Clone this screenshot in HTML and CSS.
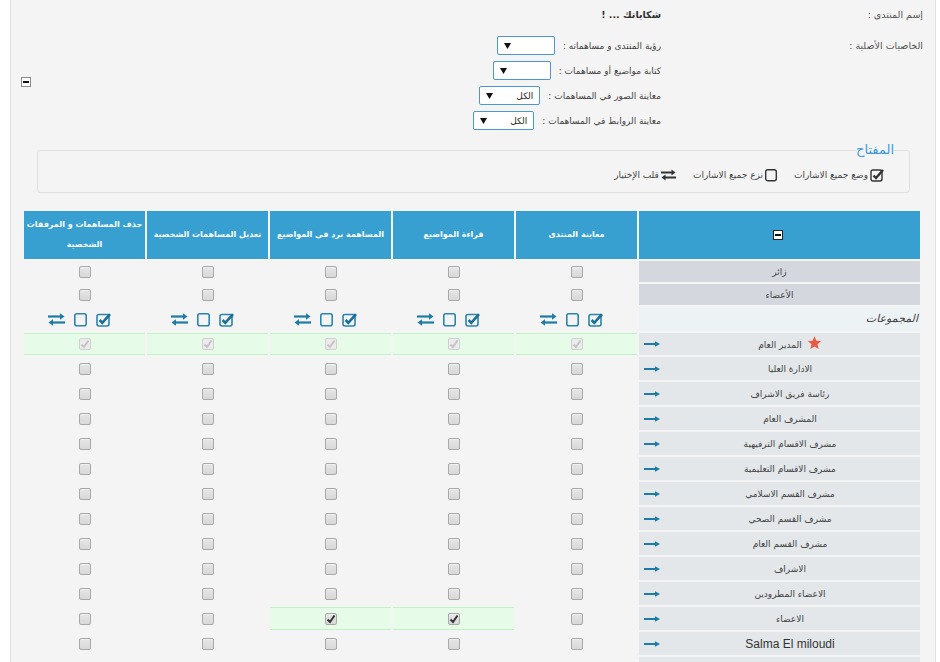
FILE: index.html
```html
<!DOCTYPE html>
<html lang="ar">
<head>
<meta charset="utf-8">
<title>الصلاحيات</title>
<link rel="stylesheet" href="styles.css">
</head>
<body>
<div class="page" dir="rtl">
  <div class="info">
    <div class="info-row row1">
      <div class="info-label">إسم المنتدى :</div>
      <div class="info-value strong">شكاياتك ... !</div>
      <div></div>
    </div>
    <div class="info-row row2">
      <div class="info-label lab2">الخاصيات الأصلية :</div>
      <div class="info-value">
        <div class="opt"><span>رؤية المنتدى و مساهماته :</span><span class="sel"><span></span><svg class="dd" width="7" height="6" viewBox="0 0 7 6"><path d="M0 0H7L3.5 6Z"/></svg></span></div>
        <div class="opt"><span>كتابة مواضيع أو مساهمات :</span><span class="sel"><span></span><svg class="dd" width="7" height="6" viewBox="0 0 7 6"><path d="M0 0H7L3.5 6Z"/></svg></span></div>
        <div class="opt"><span>معاينة الصور في المساهمات :</span><span class="sel wide"><span>الكل</span><svg class="dd" width="7" height="6" viewBox="0 0 7 6"><path d="M0 0H7L3.5 6Z"/></svg></span></div>
        <div class="opt"><span>معاينة الروابط في المساهمات :</span><span class="sel wide"><span>الكل</span><svg class="dd" width="7" height="6" viewBox="0 0 7 6"><path d="M0 0H7L3.5 6Z"/></svg></span></div>
      </div>
      <div class="toggle-cell"><span class="toggle"></span></div>
    </div>
  </div>

  <fieldset class="key">
    <legend>المفتاح</legend>
    <div class="key-items">
      <span class="ki"><svg width="15" height="14" viewBox="0 0 15 14"><rect x="1" y="2" width="11" height="11" rx="2" fill="none" stroke="#333" stroke-width="1.4"/><path d="M3.5 7.5L6 10L13 2" fill="none" stroke="#333" stroke-width="2.4"/></svg>وضع جميع الاشارات</span>
      <span class="ki"><svg width="12" height="14" viewBox="0 0 12 14"><rect x="0.7" y="1.7" width="10.6" height="11" rx="2" fill="none" stroke="#333" stroke-width="1.4"/></svg>نزع جميع الاشارات</span>
      <span class="ki"><svg width="15" height="12" viewBox="0 0 15 12"><path d="M0 3.5H11" stroke="#333" stroke-width="2"/><path d="M10.5 0.5L14.5 3.5L10.5 6.5Z" fill="#333"/><path d="M4 8.5H15" stroke="#333" stroke-width="2"/><path d="M4.5 5.5L0.5 8.5L4.5 11.5Z" fill="#333"/></svg>قلب الإختيار</span>
    </div>
  </fieldset>

  <table class="perm">
    <colgroup><col class="c-name"><col class="c"><col class="c"><col class="c"><col class="c"><col class="c"></colgroup>
    <thead>
      <tr>
        <th><span class="toggle hdr"></span></th>
        <th>معاينة المنتدى</th>
        <th>قراءة المواضيع</th>
        <th>المساهمة برد في المواضيع</th>
        <th>تعديل المساهمات الشخصية</th>
        <th>حذف المساهمات و المرفقات<br>الشخصية</th>
      </tr>
    </thead>
    <tbody>
      <tr class="r-sm"><td class="name base">زائر</td><td><span class="cb"></span></td><td><span class="cb"></span></td><td><span class="cb"></span></td><td><span class="cb"></span></td><td><span class="cb"></span></td></tr>
      <tr class="r-sm"><td class="name base">الأعضاء</td><td><span class="cb"></span></td><td><span class="cb"></span></td><td><span class="cb"></span></td><td><span class="cb"></span></td><td><span class="cb"></span></td></tr>
      <tr class="r-grp">
        <td class="name grp-title">المجموعات</td>
        <td><span class="tools"><svg width="16" height="15" viewBox="0 0 16 15"><rect x="1" y="2.5" width="12" height="11.5" rx="2" fill="none" stroke="#2a84ad" stroke-width="1.6"/><path d="M3.6 8L6.3 10.8L14 2.2" fill="none" stroke="#1b6f96" stroke-width="2.6"/></svg><svg width="13" height="15" viewBox="0 0 13 15"><rect x="0.8" y="1.8" width="11.4" height="12" rx="2" fill="none" stroke="#2a84ad" stroke-width="1.6"/></svg><svg width="17" height="13" viewBox="0 0 17 13"><path d="M0 3.5H12.5" stroke="#1d7ba5" stroke-width="2.2"/><path d="M12 0.3L16.5 3.5L12 6.7Z" fill="#1d7ba5"/><path d="M4.5 9.5H17" stroke="#1d7ba5" stroke-width="2.2"/><path d="M5 6.3L0.5 9.5L5 12.7Z" fill="#1d7ba5"/></svg></span></td>
        <td><span class="tools"><svg width="16" height="15" viewBox="0 0 16 15"><rect x="1" y="2.5" width="12" height="11.5" rx="2" fill="none" stroke="#2a84ad" stroke-width="1.6"/><path d="M3.6 8L6.3 10.8L14 2.2" fill="none" stroke="#1b6f96" stroke-width="2.6"/></svg><svg width="13" height="15" viewBox="0 0 13 15"><rect x="0.8" y="1.8" width="11.4" height="12" rx="2" fill="none" stroke="#2a84ad" stroke-width="1.6"/></svg><svg width="17" height="13" viewBox="0 0 17 13"><path d="M0 3.5H12.5" stroke="#1d7ba5" stroke-width="2.2"/><path d="M12 0.3L16.5 3.5L12 6.7Z" fill="#1d7ba5"/><path d="M4.5 9.5H17" stroke="#1d7ba5" stroke-width="2.2"/><path d="M5 6.3L0.5 9.5L5 12.7Z" fill="#1d7ba5"/></svg></span></td>
        <td><span class="tools"><svg width="16" height="15" viewBox="0 0 16 15"><rect x="1" y="2.5" width="12" height="11.5" rx="2" fill="none" stroke="#2a84ad" stroke-width="1.6"/><path d="M3.6 8L6.3 10.8L14 2.2" fill="none" stroke="#1b6f96" stroke-width="2.6"/></svg><svg width="13" height="15" viewBox="0 0 13 15"><rect x="0.8" y="1.8" width="11.4" height="12" rx="2" fill="none" stroke="#2a84ad" stroke-width="1.6"/></svg><svg width="17" height="13" viewBox="0 0 17 13"><path d="M0 3.5H12.5" stroke="#1d7ba5" stroke-width="2.2"/><path d="M12 0.3L16.5 3.5L12 6.7Z" fill="#1d7ba5"/><path d="M4.5 9.5H17" stroke="#1d7ba5" stroke-width="2.2"/><path d="M5 6.3L0.5 9.5L5 12.7Z" fill="#1d7ba5"/></svg></span></td>
        <td><span class="tools"><svg width="16" height="15" viewBox="0 0 16 15"><rect x="1" y="2.5" width="12" height="11.5" rx="2" fill="none" stroke="#2a84ad" stroke-width="1.6"/><path d="M3.6 8L6.3 10.8L14 2.2" fill="none" stroke="#1b6f96" stroke-width="2.6"/></svg><svg width="13" height="15" viewBox="0 0 13 15"><rect x="0.8" y="1.8" width="11.4" height="12" rx="2" fill="none" stroke="#2a84ad" stroke-width="1.6"/></svg><svg width="17" height="13" viewBox="0 0 17 13"><path d="M0 3.5H12.5" stroke="#1d7ba5" stroke-width="2.2"/><path d="M12 0.3L16.5 3.5L12 6.7Z" fill="#1d7ba5"/><path d="M4.5 9.5H17" stroke="#1d7ba5" stroke-width="2.2"/><path d="M5 6.3L0.5 9.5L5 12.7Z" fill="#1d7ba5"/></svg></span></td>
        <td><span class="tools"><svg width="16" height="15" viewBox="0 0 16 15"><rect x="1" y="2.5" width="12" height="11.5" rx="2" fill="none" stroke="#2a84ad" stroke-width="1.6"/><path d="M3.6 8L6.3 10.8L14 2.2" fill="none" stroke="#1b6f96" stroke-width="2.6"/></svg><svg width="13" height="15" viewBox="0 0 13 15"><rect x="0.8" y="1.8" width="11.4" height="12" rx="2" fill="none" stroke="#2a84ad" stroke-width="1.6"/></svg><svg width="17" height="13" viewBox="0 0 17 13"><path d="M0 3.5H12.5" stroke="#1d7ba5" stroke-width="2.2"/><path d="M12 0.3L16.5 3.5L12 6.7Z" fill="#1d7ba5"/><path d="M4.5 9.5H17" stroke="#1d7ba5" stroke-width="2.2"/><path d="M5 6.3L0.5 9.5L5 12.7Z" fill="#1d7ba5"/></svg></span></td>
      </tr>
      <tr class="r-admin">
        <td class="name grp"><span class="go"><svg width="16" height="6" viewBox="0 0 16 6"><path d="M0 3H12" stroke="#1d7ba5" stroke-width="2"/><path d="M11 0.2L16 3L11 5.8Z" fill="#1d7ba5"/></svg></span><svg class="star" width="15" height="14" viewBox="0 0 24 23"><path d="M12 0.5L15.1 7.8L23 8.4L17 13.6L18.8 21.4L12 17.3L5.2 21.4L7 13.6L1 8.4L8.9 7.8Z" fill="#ea5a42"/></svg>المدير العام</td>
        <td class="on"><span class="cb dis"><svg width="10" height="10" viewBox="0 0 10 10"><path d="M1.5 5.5L4 8L8.5 1.5" fill="none" stroke="#c4c4c4" stroke-width="2"/></svg></span></td>
        <td class="on"><span class="cb dis"><svg width="10" height="10" viewBox="0 0 10 10"><path d="M1.5 5.5L4 8L8.5 1.5" fill="none" stroke="#c4c4c4" stroke-width="2"/></svg></span></td>
        <td class="on"><span class="cb dis"><svg width="10" height="10" viewBox="0 0 10 10"><path d="M1.5 5.5L4 8L8.5 1.5" fill="none" stroke="#c4c4c4" stroke-width="2"/></svg></span></td>
        <td class="on"><span class="cb dis"><svg width="10" height="10" viewBox="0 0 10 10"><path d="M1.5 5.5L4 8L8.5 1.5" fill="none" stroke="#c4c4c4" stroke-width="2"/></svg></span></td>
        <td class="on"><span class="cb dis"><svg width="10" height="10" viewBox="0 0 10 10"><path d="M1.5 5.5L4 8L8.5 1.5" fill="none" stroke="#c4c4c4" stroke-width="2"/></svg></span></td>
      </tr>
      <tr><td class="name grp"><span class="go"><svg width="16" height="6" viewBox="0 0 16 6"><path d="M0 3H12" stroke="#1d7ba5" stroke-width="2"/><path d="M11 0.2L16 3L11 5.8Z" fill="#1d7ba5"/></svg></span>الادارة العليا</td><td><span class="cb"></span></td><td><span class="cb"></span></td><td><span class="cb"></span></td><td><span class="cb"></span></td><td><span class="cb"></span></td></tr>
      <tr><td class="name grp"><span class="go"><svg width="16" height="6" viewBox="0 0 16 6"><path d="M0 3H12" stroke="#1d7ba5" stroke-width="2"/><path d="M11 0.2L16 3L11 5.8Z" fill="#1d7ba5"/></svg></span>رئاسة فريق الاشراف</td><td><span class="cb"></span></td><td><span class="cb"></span></td><td><span class="cb"></span></td><td><span class="cb"></span></td><td><span class="cb"></span></td></tr>
      <tr><td class="name grp"><span class="go"><svg width="16" height="6" viewBox="0 0 16 6"><path d="M0 3H12" stroke="#1d7ba5" stroke-width="2"/><path d="M11 0.2L16 3L11 5.8Z" fill="#1d7ba5"/></svg></span>المشرف العام</td><td><span class="cb"></span></td><td><span class="cb"></span></td><td><span class="cb"></span></td><td><span class="cb"></span></td><td><span class="cb"></span></td></tr>
      <tr><td class="name grp"><span class="go"><svg width="16" height="6" viewBox="0 0 16 6"><path d="M0 3H12" stroke="#1d7ba5" stroke-width="2"/><path d="M11 0.2L16 3L11 5.8Z" fill="#1d7ba5"/></svg></span>مشرف الاقسام الترفيهية</td><td><span class="cb"></span></td><td><span class="cb"></span></td><td><span class="cb"></span></td><td><span class="cb"></span></td><td><span class="cb"></span></td></tr>
      <tr><td class="name grp"><span class="go"><svg width="16" height="6" viewBox="0 0 16 6"><path d="M0 3H12" stroke="#1d7ba5" stroke-width="2"/><path d="M11 0.2L16 3L11 5.8Z" fill="#1d7ba5"/></svg></span>مشرف الاقسام التعليمية</td><td><span class="cb"></span></td><td><span class="cb"></span></td><td><span class="cb"></span></td><td><span class="cb"></span></td><td><span class="cb"></span></td></tr>
      <tr><td class="name grp"><span class="go"><svg width="16" height="6" viewBox="0 0 16 6"><path d="M0 3H12" stroke="#1d7ba5" stroke-width="2"/><path d="M11 0.2L16 3L11 5.8Z" fill="#1d7ba5"/></svg></span>مشرف القسم الاسلامي</td><td><span class="cb"></span></td><td><span class="cb"></span></td><td><span class="cb"></span></td><td><span class="cb"></span></td><td><span class="cb"></span></td></tr>
      <tr><td class="name grp"><span class="go"><svg width="16" height="6" viewBox="0 0 16 6"><path d="M0 3H12" stroke="#1d7ba5" stroke-width="2"/><path d="M11 0.2L16 3L11 5.8Z" fill="#1d7ba5"/></svg></span>مشرف القسم الصحي</td><td><span class="cb"></span></td><td><span class="cb"></span></td><td><span class="cb"></span></td><td><span class="cb"></span></td><td><span class="cb"></span></td></tr>
      <tr><td class="name grp"><span class="go"><svg width="16" height="6" viewBox="0 0 16 6"><path d="M0 3H12" stroke="#1d7ba5" stroke-width="2"/><path d="M11 0.2L16 3L11 5.8Z" fill="#1d7ba5"/></svg></span>مشرف القسم العام</td><td><span class="cb"></span></td><td><span class="cb"></span></td><td><span class="cb"></span></td><td><span class="cb"></span></td><td><span class="cb"></span></td></tr>
      <tr><td class="name grp"><span class="go"><svg width="16" height="6" viewBox="0 0 16 6"><path d="M0 3H12" stroke="#1d7ba5" stroke-width="2"/><path d="M11 0.2L16 3L11 5.8Z" fill="#1d7ba5"/></svg></span>الاشراف</td><td><span class="cb"></span></td><td><span class="cb"></span></td><td><span class="cb"></span></td><td><span class="cb"></span></td><td><span class="cb"></span></td></tr>
      <tr><td class="name grp"><span class="go"><svg width="16" height="6" viewBox="0 0 16 6"><path d="M0 3H12" stroke="#1d7ba5" stroke-width="2"/><path d="M11 0.2L16 3L11 5.8Z" fill="#1d7ba5"/></svg></span>الاعضاء المطرودين</td><td><span class="cb"></span></td><td><span class="cb"></span></td><td><span class="cb"></span></td><td><span class="cb"></span></td><td><span class="cb"></span></td></tr>
      <tr><td class="name grp"><span class="go"><svg width="16" height="6" viewBox="0 0 16 6"><path d="M0 3H12" stroke="#1d7ba5" stroke-width="2"/><path d="M11 0.2L16 3L11 5.8Z" fill="#1d7ba5"/></svg></span>الاعضاء</td><td><span class="cb"></span></td><td class="on"><span class="cb"><svg width="10" height="10" viewBox="0 0 10 10"><path d="M1.5 5.5L4 8L8.5 1.5" fill="none" stroke="#333" stroke-width="2"/></svg></span></td><td class="on"><span class="cb"><svg width="10" height="10" viewBox="0 0 10 10"><path d="M1.5 5.5L4 8L8.5 1.5" fill="none" stroke="#333" stroke-width="2"/></svg></span></td><td><span class="cb"></span></td><td><span class="cb"></span></td></tr>
      <tr><td class="name grp latin"><span class="go"><svg width="16" height="6" viewBox="0 0 16 6"><path d="M0 3H12" stroke="#1d7ba5" stroke-width="2"/><path d="M11 0.2L16 3L11 5.8Z" fill="#1d7ba5"/></svg></span>Salma El miloudi</td><td><span class="cb"></span></td><td><span class="cb"></span></td><td><span class="cb"></span></td><td><span class="cb"></span></td><td><span class="cb"></span></td></tr>
      <tr><td class="name grp"><span class="go"><svg width="16" height="6" viewBox="0 0 16 6"><path d="M0 3H12" stroke="#1d7ba5" stroke-width="2"/><path d="M11 0.2L16 3L11 5.8Z" fill="#1d7ba5"/></svg></span>&nbsp;</td><td><span class="cb"></span></td><td><span class="cb"></span></td><td><span class="cb"></span></td><td><span class="cb"></span></td><td><span class="cb"></span></td></tr>
    </tbody>
  </table>
</div>
</body>
</html>
```

FILE: styles.css
```css
* { box-sizing: border-box; }
html, body { margin: 0; padding: 0; background: #ffffff; }
body {
  font-family: "DejaVu Sans", "Liberation Sans", sans-serif;
  font-size: 10px;
  color: #444;
  overflow: hidden;
  height: 662px;
}
.page {
  margin-left: 10px;
  width: 926px;
  min-height: 662px;
  background: #f4f4f4;
  border-left: 1px solid #e2e2e2;
  border-right: 1px solid #e2e2e2;
  direction: rtl;
}

/* info block */
.info { padding: 5px 12px 0 10px; }
.info-row {
  display: grid;
  grid-template-columns: 262px 1fr auto;
}
.row1 { line-height: 20px; }
.row2 { margin-top: 8px; align-items: start; }
.lab2 { line-height: 25px; }
.info-label { color: #555; font-size: 9.5px; }
.strong { font-weight: bold; color: #333; font-size: 9.5px; }
.opt {
  display: flex;
  align-items: center;
  gap: 8px;
  height: 25px;
  color: #444;
  font-size: 9px;
}
.sel {
  width: 58px;
  height: 19px;
  border: 1px solid #4b97d1;
  border-radius: 2px;
  background: #fff;
  display: flex;
  align-items: center;
  justify-content: space-between;
  padding: 0 6px 0 6px;
  color: #222;
  font-size: 9px;
}
.sel.wide { width: 61px; }
.dd { fill: #111; }
.toggle-cell { align-self: center; margin-top: -3px; }
.toggle {
  display: block;
  width: 10px;
  height: 10px;
  border: 1px solid #8a8a8a;
  background: #fff;
  position: relative;
}
.toggle::after {
  content: "";
  position: absolute;
  left: 1px;
  right: 1px;
  top: 3px;
  height: 2px;
  background: #111;
}
.toggle.hdr {
  display: inline-block;
  border-color: #222;
  vertical-align: middle;
  margin-right: 4px;
}

/* legend */
.key {
  margin: 8px 25px 0 26px;
  border: 1px solid #e0e0e0;
  border-radius: 3px;
  padding: 8px 14px 9px;
  min-width: 0;
}
.key legend {
  padding: 0;
  font-size: 13px;
  line-height: 18px;
  color: #3b9bd8;
  margin-right: 1px;
}
.key-items {
  display: flex;
  align-items: center;
  gap: 17px;
  padding-right: 10px;
  line-height: 16px;
  color: #444;
  font-size: 9px;
}
.ki { display: flex; align-items: center; gap: 2px; }

/* permissions table */
.perm {
  margin: 16px 13px 0 0;
  border-collapse: separate;
  border-spacing: 2px;
  table-layout: fixed;
  width: 900px;
}
.perm col.c-name { width: 281px; }
.perm col.c { width: 121px; }
.perm th {
  background: #389fd1;
  color: #fff;
  font-weight: bold;
  font-size: 8px;
  line-height: 20px;
  height: 48px;
  padding: 4px 1px;
  text-align: center;
  vertical-align: middle;
  white-space: nowrap;
  overflow: hidden;
}
.perm td {
  padding: 0;
  height: 23px;
  text-align: center;
  vertical-align: middle;
  line-height: 16px;
}
.perm tr.r-sm td { height: 21px; }
.perm tr.r-grp td { height: 24px; }
.perm tr.r-admin td { height: 22px; }
.name { color: #444; font-size: 9px; }
.base { background: #d4d8de; }
.grp { background: #e3e7ea; }
.grp-title {
  background: #edf2f5;
  text-align: right !important;
  font-style: italic;
  font-size: 11px;
  padding-right: 2px !important;
}
.latin {
  font-family: "Liberation Sans", sans-serif;
  font-size: 12px;
  color: #333;
}
.go {
  float: left;
  display: flex;
  align-items: center;
  height: 16px;
  margin-left: 5px;
}
.star { vertical-align: -2px; margin-left: 5px; }
.on {
  background: #e6fce8;
  box-shadow: inset 0 1px 0 #c2f2c7, inset 0 -1px 0 #c2f2c7;
}
.cb {
  display: inline-flex;
  align-items: center;
  justify-content: center;
  width: 12px;
  height: 12px;
  border: 1px solid #a9a9a9;
  border-radius: 2px;
  background: linear-gradient(#e6e6e6, #d8d8d8);
  box-shadow: inset 0 1px 0 #efefef;
  vertical-align: middle;
}
.cb.dis {
  border-color: #d0d0d0;
  background: #ececec;
  box-shadow: none;
}
.tools {
  display: inline-flex;
  align-items: center;
  gap: 9px;
  margin-right: 9px;
  vertical-align: middle;
}
```
